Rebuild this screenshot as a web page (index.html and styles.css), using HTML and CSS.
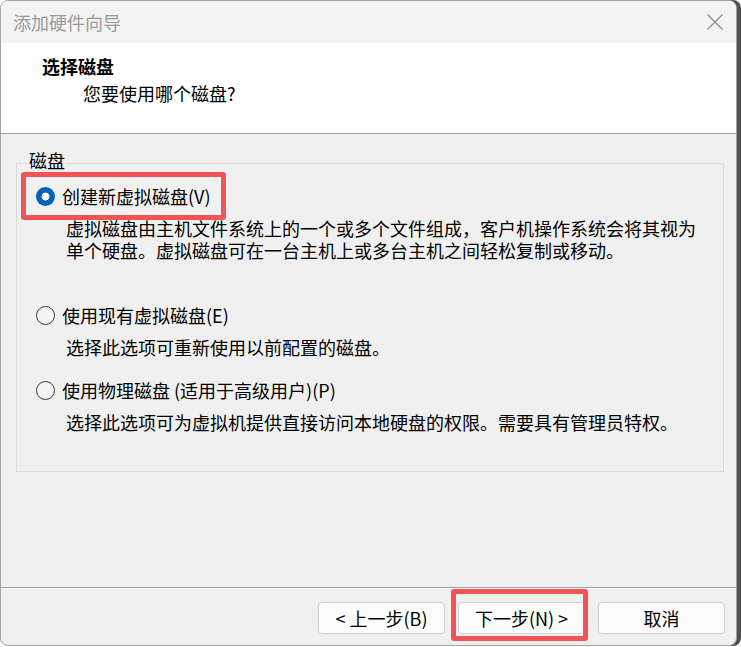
FILE: index.html
```html
<!DOCTYPE html>
<html lang="zh-CN">
<head>
<meta charset="utf-8">
<title>添加硬件向导</title>
<link rel="stylesheet" href="styles.css">
</head>
<body>
<div class="window">
  <div class="titlebar">
    <span class="title">添加硬件向导</span>
    <svg class="close" width="16" height="16" viewBox="0 0 16 16"><path d="M0.5 0.5 L15.5 15.5 M15.5 0.5 L0.5 15.5" stroke="#8a8a8a" stroke-width="1.2" fill="none"/></svg>
  </div>
  <div class="header">
    <div class="heading">选择磁盘</div>
    <div class="subheading">您要使用哪个磁盘?</div>
  </div>
  <div class="sep-top"></div>
  <div class="content">
    <fieldset class="group">
      <legend class="legend">磁盘</legend>
      <div class="option first">
        <div class="opt hl"><span class="radio checked"></span><span class="label">创建新虚拟磁盘(V)</span></div>
        <div class="desc">虚拟磁盘由主机文件系统上的一个或多个文件组成，客户机操作系统会将其视为<br>单个硬盘。虚拟磁盘可在一台主机上或多台主机之间轻松复制或移动。</div>
      </div>
      <div class="option second">
        <div class="opt"><span class="radio"></span><span class="label">使用现有虚拟磁盘(E)</span></div>
        <div class="desc">选择此选项可重新使用以前配置的磁盘。</div>
      </div>
      <div class="option third">
        <div class="opt"><span class="radio"></span><span class="label">使用物理磁盘 (适用于高级用户)(P)</span></div>
        <div class="desc">选择此选项可为虚拟机提供直接访问本地硬盘的权限。需要具有管理员特权。</div>
      </div>
    </fieldset>
  </div>
  <div class="sep-bottom"></div>
  <div class="footer">
    <button class="btn">&lt; 上一步(B)</button>
    <button class="btn marked">下一步(N) &gt;</button>
    <button class="btn">取消</button>
  </div>
</div>
</body>
</html>
```
FILE: styles.css
```css
* { box-sizing: border-box; }
html, body {
  margin: 0;
  padding: 0;
  background: #ffffff;
}
body {
  width: 741px;
  height: 647px;
  overflow: hidden;
  font-family: "Noto Sans CJK SC", "Noto Sans", sans-serif;
  font-size: 18px;
  color: #000;
}
.window {
  width: 737px;
  height: 646px;
  border: 1px solid #a2a2a2;
  border-radius: 8px;
  overflow: hidden;
  display: flex;
  flex-direction: column;
  background: #f0f0f0;
  box-shadow: 4px 0 0 #505050;
}
.titlebar {
  height: 42px;
  flex: none;
  background: #f3f3f3;
  display: flex;
  align-items: center;
  justify-content: space-between;
  padding: 0 13px 0 12px;
}
.title {
  font-size: 18px;
  line-height: 24px;
  color: #9a9a9a;
}
.close { display: block; }
.header {
  height: 90px;
  flex: none;
  background: #ffffff;
  padding: 11px 0 0 41px;
}
.heading {
  font-weight: 700;
  line-height: 24px;
}
.subheading {
  margin-top: 3px;
  padding-left: 41px;
  line-height: 24px;
}
.sep-top {
  height: 1px;
  flex: none;
  background: #a0a0a0;
}
.content {
  flex: 1;
  padding: 16px 12px 0 15px;
}
.group {
  margin: 0;
  border: 1px solid #dcdcdc;
  padding: 0 0 38px 4px;
}
.legend {
  margin-left: 7px;
  padding: 0 1px 6px 1px;
  line-height: 20px;
}
.option.first { margin-top: -4px; }
.option.second { margin-top: 30px; }
.option.third { margin-top: 8px; }
.opt {
  display: flex;
  align-items: center;
  gap: 7px;
  width: max-content;
  height: 48px;
  padding: 0 10px;
  border: 5px solid transparent;
  border-radius: 3px;
}
.opt.hl { border-color: #f05454; }
.label { line-height: 38px; }
.radio {
  width: 19px;
  height: 19px;
  border-radius: 50%;
  border: 1px solid #3a3a3a;
  background: #f3f3f3;
  flex: none;
}
.radio.checked {
  border: none;
  background: radial-gradient(circle, #ffffff 0 3.6px, #0062b8 4.3px);
}
.desc {
  margin-top: -3px;
  margin-left: 45px;
  line-height: 22px;
}
.sep-bottom {
  height: 2px;
  flex: none;
  border-top: 1px solid #a0a0a0;
  background: #ffffff;
}
.footer {
  height: 56px;
  flex: none;
  display: flex;
  justify-content: flex-end;
  align-items: flex-start;
  gap: 13px;
  padding: 13px 11px 0 0;
}
.btn {
  width: 127px;
  height: 32px;
  border: 1px solid #d0d0d0;
  border-radius: 4px;
  background: #fdfdfd;
  font-family: "Noto Sans CJK SC", "Noto Sans", sans-serif;
  font-size: 18px;
  line-height: 28px;
  color: #000;
  padding: 0;
}
.btn.marked { position: relative; }
.btn.marked::after {
  content: "";
  position: absolute;
  top: -14px;
  right: -4px;
  bottom: -8px;
  left: -8px;
  border: 5px solid #f05454;
  border-radius: 3px;
  pointer-events: none;
}
```
